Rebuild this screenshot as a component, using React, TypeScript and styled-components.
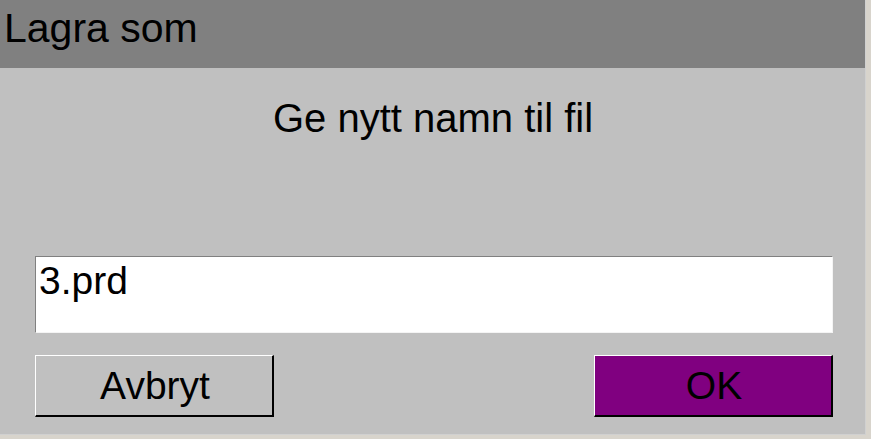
import React, { useState } from 'react';
import styled, { createGlobalStyle } from 'styled-components';

const GlobalStyle = createGlobalStyle`
  html, body {
    margin: 0;
    padding: 0;
    background: #d8d4cc;
    font-family: 'Liberation Sans', Arial, sans-serif;
  }
`;

const Dialog = styled.div`
  width: 866px;
  height: 435px;
  box-sizing: border-box;
  background-color: #c0c0c0;
  border-right: 1px solid #d0d0d0;
  border-bottom: 1px solid #d0d0d0;
  display: flex;
  flex-direction: column;
`;

const TitleBar = styled.div`
  height: 68px;
  box-sizing: border-box;
  background-color: #808080;
  color: #000;
  font-size: 41px;
  line-height: 40px;
  padding: 8px 0 0 4px;
`;

const Message = styled.div`
  margin-top: 30px;
  text-align: center;
  font-size: 40px;
  line-height: 40px;
  padding-left: 1px;
  color: #000;
`;

const Body = styled.div`
  display: flex;
  flex-direction: column;
  padding: 0 32px 0 35px;
  margin-top: 118px;
  gap: 22px;
`;

const NameInput = styled.input`
  height: 77px;
  box-sizing: border-box;
  width: 100%;
  border-style: solid;
  border-width: 1px;
  border-color: #808080 #f4f4f4 #f4f4f4 #808080;
  background: #fff;
  font-family: 'Liberation Sans', Arial, sans-serif;
  font-size: 39px;
  line-height: 39px;
  color: #000;
  padding: 3px 0 30px 3px;
  outline: none;
  display: block;
`;

const ButtonRow = styled.div`
  display: flex;
  justify-content: space-between;
`;

const Button = styled.button<{ $primary?: boolean }>`
  width: 239px;
  height: 62px;
  box-sizing: border-box;
  border-style: solid;
  border-width: 1px 2px 2px 1px;
  border-color: #fff #000 #000 #fff;
  background-color: ${(p) => (p.$primary ? '#800080' : '#c0c0c0')};
  color: #000;
  font-family: 'Liberation Sans', Arial, sans-serif;
  font-size: 39px;
  line-height: 39px;
  padding: 0 0 0 2px;
  cursor: pointer;
`;

const App = (): JSX.Element => {
  const [name, setName] = useState('3.prd');

  return (
    <>
      <GlobalStyle />
      <Dialog>
        <TitleBar>Lagra som</TitleBar>
        <Message>Ge nytt namn til fil</Message>
        <Body>
          <NameInput value={name} onChange={(e) => setName(e.target.value)} />
          <ButtonRow>
            <Button>Avbryt</Button>
            <Button $primary>OK</Button>
          </ButtonRow>
        </Body>
      </Dialog>
    </>
  );
};

export default App;
